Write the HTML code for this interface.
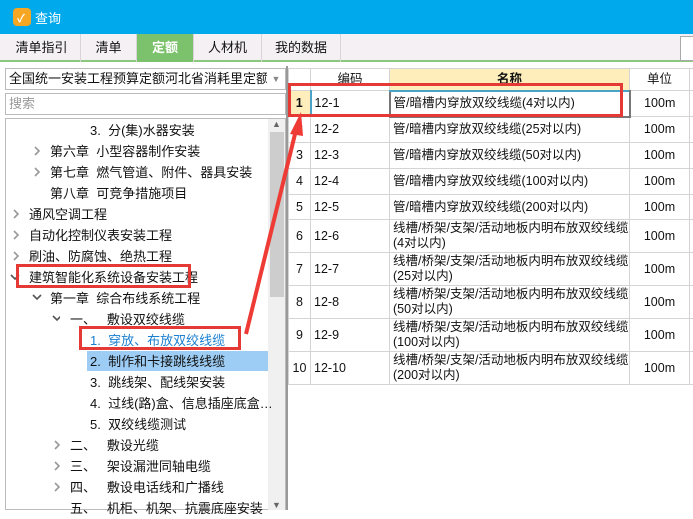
<!DOCTYPE html>
<html><head><meta charset="utf-8"><style>
*{margin:0;padding:0;box-sizing:border-box}
body{width:693px;height:510px;overflow:hidden;background:#fff;font-family:"Liberation Sans","Noto Sans CJK SC",sans-serif;font-size:13px;color:#111;position:relative}
.a{position:absolute;white-space:nowrap}
.tab{position:absolute;top:34px;height:28px;line-height:28px;text-align:center;font-size:13px;border-right:1px solid #d8d4d8}
.tr{position:absolute;height:21px;line-height:21px;white-space:nowrap}
.r,.d{position:absolute}
table{border-collapse:collapse;position:absolute;left:288px;top:68px;table-layout:fixed;width:411px}
td{border:1px solid #d4d4d4;padding:0 3px;font-size:12.5px;line-height:15px;white-space:nowrap;overflow:hidden}
</style></head><body>
<div class="a" style="left:0;top:0;width:693px;height:34px;background:#00a8ec"></div>
<div class="a" style="left:13px;top:8px;width:18px;height:18px;background:#f5a623;border-radius:4px"></div>
<div class="a" style="left:17px;top:10px;color:#fff;font-size:11px;font-weight:bold">✓</div>
<div class="a" style="left:35px;top:8px;color:#fff;font-size:13px">查询</div>
<div class="a" style="left:0;top:34px;width:693px;height:28px;background:#f4f0f4;border-bottom:2px solid #8cc77e"></div>
<div class="tab" style="left:3px;width:78px">清单指引</div>
<div class="tab" style="left:81px;width:56px">清单</div>
<div class="tab" style="left:137px;width:57px;background:#7cc26c;color:#fff;font-weight:bold">定额</div>
<div class="tab" style="left:194px;width:68px">人材机</div>
<div class="tab" style="left:262px;width:79px">我的数据</div>
<div class="a" style="left:680px;top:36px;width:20px;height:25px;border:1px solid #aaa;background:#fff"></div>

<div class="a" style="left:5px;top:68px;width:281px;height:22px;border:1px solid #bbb;line-height:20px;padding-left:3px;overflow:hidden">全国统一安装工程预算定额河北省消耗里定额(20<span style="position:absolute;right:0;top:0;width:18px;height:20px;background:#fff;color:#888;font-size:9px;text-align:center">▼</span></div>
<div class="a" style="left:5px;top:93px;width:281px;height:22px;border:1px solid #bbb;line-height:20px;padding-left:3px;color:#999">搜索</div>
<div class="a" style="left:5px;top:118px;width:281px;height:392px;border:1px solid #bbb"></div>
<div class="a" style="left:268px;top:119px;width:17px;height:391px;background:#f0f0f0"></div>
<div class="a" style="left:270px;top:132px;width:14px;height:165px;background:#cdcdcd"></div>
<div class="a" style="left:272px;top:119px;color:#666;font-size:9px">▲</div>
<div class="a" style="left:272px;top:500px;color:#666;font-size:9px">▼</div>

<svg class="a" style="left:0;top:0" width="60" height="510" fill="none" stroke="#999" stroke-width="1.6">
<polyline points="35,147 39,151 35,155"/>
<polyline points="35,168 39,172 35,176"/>
<polyline points="14,210 18,214 14,218"/>
<polyline points="14,231 18,235 14,239"/>
<polyline points="14,252 18,256 14,260"/>
<polyline points="11,275 15,279 19,275" stroke="#555"/>
<polyline points="33,295 37,299 41,295" stroke="#555"/>
<polyline points="53,316 57,320 61,316" stroke="#555"/>
<polyline points="55,441 59,445 55,449"/>
<polyline points="55,462 59,466 55,470"/>
<polyline points="55,483 59,487 55,491"/>
</svg>
<div class="tr" style="left:90px;top:120px">3.&nbsp; 分(集)水器安装</div>
<div class="tr" style="left:50px;top:141px">第六章&nbsp; 小型容器制作安装</div>
<div class="tr" style="left:50px;top:162px">第七章&nbsp; 燃气管道、附件、器具安装</div>
<div class="tr" style="left:50px;top:183px">第八章&nbsp; 可竞争措施项目</div>
<div class="tr" style="left:29px;top:204px">通风空调工程</div>
<div class="tr" style="left:29px;top:225px">自动化控制仪表安装工程</div>
<div class="tr" style="left:29px;top:246px">刷油、防腐蚀、绝热工程</div>
<div class="tr" style="left:29px;top:267px">建筑智能化系统设备安装工程</div>
<div class="tr" style="left:50px;top:288px">第一章&nbsp; 综合布线系统工程</div>
<div class="tr" style="left:70px;top:309px">一、&nbsp;&nbsp; 敷设双绞线缆</div>
<div class="tr" style="left:90px;top:330px;color:#1a7fd0">1.&nbsp; 穿放、布放双绞线缆</div>
<div class="a" style="left:87px;top:351px;width:181px;height:20px;background:#9dcdf5"></div>
<div class="tr" style="left:90px;top:351px">2.&nbsp; 制作和卡接跳线线缆</div>
<div class="tr" style="left:90px;top:372px">3.&nbsp; 跳线架、配线架安装</div>
<div class="tr" style="left:90px;top:393px">4.&nbsp; 过线(路)盒、信息插座底盒…</div>
<div class="tr" style="left:90px;top:414px">5.&nbsp; 双绞线缆测试</div>
<div class="tr" style="left:70px;top:435px">二、&nbsp;&nbsp; 敷设光缆</div>
<div class="tr" style="left:70px;top:456px">三、&nbsp;&nbsp; 架设漏泄同轴电缆</div>
<div class="tr" style="left:70px;top:477px">四、&nbsp;&nbsp; 敷设电话线和广播线</div>
<div class="tr" style="left:70px;top:498px">五、&nbsp;&nbsp; 机柜、机架、抗震底座安装</div>

<div class="a" style="left:286px;top:66px;width:2px;height:444px;background:#999"></div>
<table>
<colgroup><col style="width:22px"><col style="width:79px"><col style="width:240px"><col style="width:60px"><col style="width:10px"></colgroup>
<tr style="height:22px"><td></td><td style="text-align:center">编码</td><td style="text-align:center;background:#fdeebc;font-weight:bold">名称</td><td style="text-align:center">单位</td><td></td></tr>
<tr style="height:26px"><td style="background:#fdeebc;font-weight:bold;text-align:center;border-right:2px solid #4aa3c6">1</td><td>12-1</td><td style="border:2px solid #777;border-top-color:#4aa3c6">管/暗槽内穿放双绞线缆(4对以内)</td><td style="text-align:center">100m</td><td></td></tr>
<tr style="height:26px"><td style="text-align:center">2</td><td>12-2</td><td>管/暗槽内穿放双绞线缆(25对以内)</td><td style="text-align:center">100m</td><td></td></tr>
<tr style="height:26px"><td style="text-align:center">3</td><td>12-3</td><td>管/暗槽内穿放双绞线缆(50对以内)</td><td style="text-align:center">100m</td><td></td></tr>
<tr style="height:26px"><td style="text-align:center">4</td><td>12-4</td><td>管/暗槽内穿放双绞线缆(100对以内)</td><td style="text-align:center">100m</td><td></td></tr>
<tr style="height:25px"><td style="text-align:center">5</td><td>12-5</td><td>管/暗槽内穿放双绞线缆(200对以内)</td><td style="text-align:center">100m</td><td></td></tr>
<tr style="height:33px"><td style="text-align:center">6</td><td>12-6</td><td>线槽/桥架/支架/活动地板内明布放双绞线缆<br>(4对以内)</td><td style="text-align:center">100m</td><td></td></tr>
<tr style="height:33px"><td style="text-align:center">7</td><td>12-7</td><td>线槽/桥架/支架/活动地板内明布放双绞线缆<br>(25对以内)</td><td style="text-align:center">100m</td><td></td></tr>
<tr style="height:33px"><td style="text-align:center">8</td><td>12-8</td><td>线槽/桥架/支架/活动地板内明布放双绞线缆<br>(50对以内)</td><td style="text-align:center">100m</td><td></td></tr>
<tr style="height:33px"><td style="text-align:center">9</td><td>12-9</td><td>线槽/桥架/支架/活动地板内明布放双绞线缆<br>(100对以内)</td><td style="text-align:center">100m</td><td></td></tr>
<tr style="height:33px"><td style="text-align:center;padding:0">10</td><td>12-10</td><td>线槽/桥架/支架/活动地板内明布放双绞线缆<br>(200对以内)</td><td style="text-align:center">100m</td><td></td></tr>
</table>

<div class="a" style="left:16px;top:264px;width:175px;height:24px;border:3px solid #e53935"></div>
<div class="a" style="left:79px;top:326px;width:162px;height:24px;border:3px solid #e53935"></div>
<div class="a" style="left:288px;top:83px;width:335px;height:34px;border:3px solid #e53935"></div>
<svg class="a" style="left:0;top:0" width="693" height="510"><line x1="246" y1="334" x2="296" y2="130" stroke="#ee3b36" stroke-width="4"/><polygon points="301,112 290,134 303,136" fill="#ee3b36"/></svg>
</body></html>
